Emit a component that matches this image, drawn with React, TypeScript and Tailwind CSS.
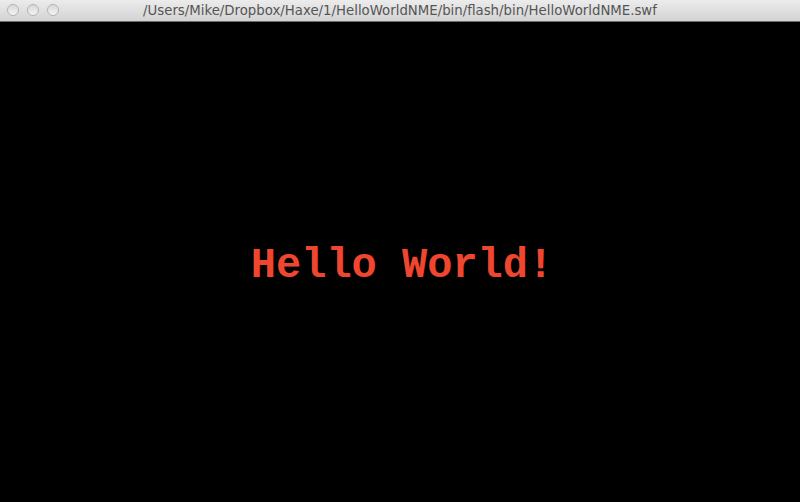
import React from "react";

export default function App() {
  return (
    <div className="w-[800px] h-[502px] flex flex-col bg-black overflow-hidden">
      <div className="h-[22px] shrink-0 relative flex items-center justify-center border-b border-[#6b6b6b] bg-gradient-to-b from-[#ececec] to-[#d3d3d3]">
        <div className="absolute left-[7px] top-[4px] flex gap-[8px]">
          <div className="w-[12px] h-[12px] rounded-full border border-[#b4b4b4] bg-gradient-to-b from-[#d8d8d8] to-[#f4f4f4]" />
          <div className="w-[12px] h-[12px] rounded-full border border-[#b4b4b4] bg-gradient-to-b from-[#d8d8d8] to-[#f4f4f4]" />
          <div className="w-[12px] h-[12px] rounded-full border border-[#b4b4b4] bg-gradient-to-b from-[#d8d8d8] to-[#f4f4f4]" />
        </div>
        <span className="text-[13.3px] leading-none text-[#555555] pt-[1px]" style={{ fontFamily: '"DejaVu Sans", sans-serif' }}>
          /Users/Mike/Dropbox/Haxe/1/HelloWorldNME/bin/flash/bin/HelloWorldNME.swf
        </span>
      </div>
      <div className="flex-1 flex items-center justify-center pt-[7px] pl-[4px]">
        <span className="text-[42px] font-bold text-[#ef4630] leading-none" style={{ fontFamily: '"Liberation Mono", monospace' }}>
          Hello World!
        </span>
      </div>
    </div>
  );
}
